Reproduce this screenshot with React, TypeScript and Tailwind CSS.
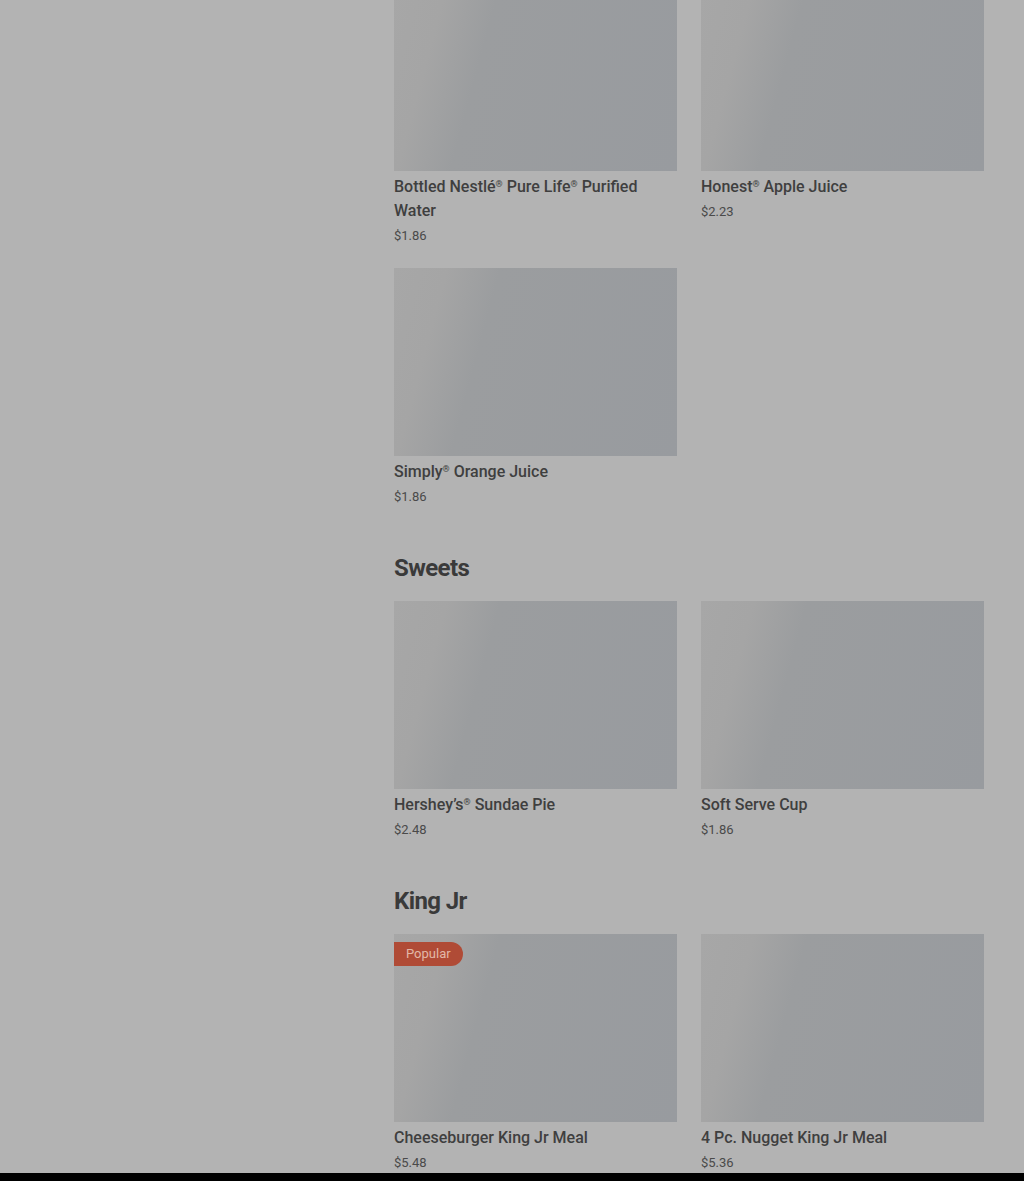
import React from "react";

type Item = { name: string; price: string; popular?: boolean };
type Section = { title?: string; items: Item[] };

const sections: Section[] = [
  {
    items: [
      { name: "Bottled Nestlé® Pure Life® Purified Water", price: "$1.86" },
      { name: "Honest® Apple Juice", price: "$2.23" },
      { name: "Simply® Orange Juice", price: "$1.86" },
    ],
  },
  {
    title: "Sweets",
    items: [
      { name: "Hershey’s® Sundae Pie", price: "$2.48" },
      { name: "Soft Serve Cup", price: "$1.86" },
    ],
  },
  {
    title: "King Jr",
    items: [
      { name: "Cheeseburger King Jr Meal", price: "$5.48", popular: true },
      { name: "4 Pc. Nugget King Jr Meal", price: "$5.36" },
    ],
  },
];

// the ® mark is small and raised in the menu font
function Name({ text }: { text: string }) {
  const parts = text.split("®");
  return (
    <>
      {parts.map((p, i) => (
        <React.Fragment key={i}>
          {p}
          {i < parts.length - 1 && (
            <span className="relative -top-[5px] text-[9px] leading-none">®</span>
          )}
        </React.Fragment>
      ))}
    </>
  );
}

function ItemCard({ item }: { item: Item }) {
  return (
    <div className="flex flex-col">
      <div className="relative h-[188px] w-full bg-[linear-gradient(105deg,#a7a7a7_0%,#a5a5a5_16%,#9b9d9f_32%,#989b9f_100%)]">
        {item.popular && (
          <span className="absolute left-0 top-2 h-6 rounded-r-full bg-[#b04b36] px-3 text-[13px] leading-6 text-[#e2b8a8]">
            Popular
          </span>
        )}
      </div>
      <h3 className="mt-1 h-auto text-base font-medium leading-6 text-[#3f3f3f]">
        <Name text={item.name} />
      </h3>
      <p className="mt-[3px] text-[13px] leading-5 text-[#4a4a4a]">{item.price}</p>
    </div>
  );
}

export default function App() {
  return (
    <div
      className="flex h-[1181px] flex-col overflow-hidden bg-[#b3b3b3]"
      style={{ fontFamily: "Roboto, 'Liberation Sans', sans-serif" }}
    >
      <div className="flex h-[1173px] overflow-hidden">
        <aside className="w-[394px] shrink-0" />
        <main className="-mt-[17px] w-[590px] shrink-0">
          {sections.map((s, i) => (
            <section key={i} className={i > 0 ? "mt-[45px]" : ""}>
              {s.title && (
                <h2 className="mb-[17px] text-2xl font-bold leading-8 tracking-tight text-[#3a3a3a]">
                  {s.title}
                </h2>
              )}
              <div className="grid grid-cols-2 gap-x-6 gap-y-[22px]">
                {s.items.map((it) => (
                  <ItemCard key={it.name} item={it} />
                ))}
              </div>
            </section>
          ))}
        </main>
      </div>
      <div className="h-2 shrink-0 bg-black" />
    </div>
  );
}
